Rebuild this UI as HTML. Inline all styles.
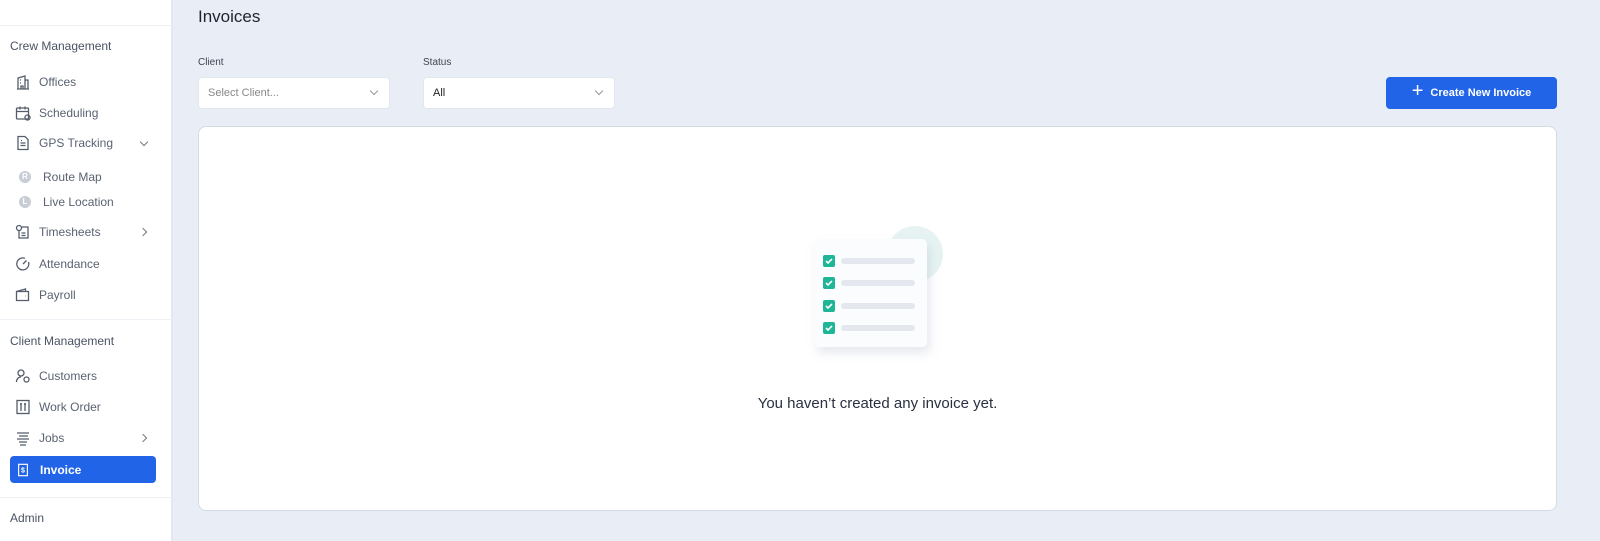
<!DOCTYPE html>
<html><head><style>
*{box-sizing:border-box;margin:0;padding:0}
body{width:1600px;height:541px;overflow:hidden;background:#e9eef6;font-family:"Liberation Sans",sans-serif;position:relative;color:#2b3445}
.sb{position:absolute;left:0;top:0;width:173px;height:541px;background:#fff;border-right:2px solid #e3e8f0}
.hr{position:absolute;left:0;width:172px;height:1px;background:#edf0f4}
.sec{position:absolute;left:10px;font-size:12px;color:#4a5263}
.it{position:absolute;left:15px;font-size:12px;color:#5a6272;display:flex;align-items:center}
.it svg{width:16px;height:16px;margin-right:8px;stroke:#555d6b;fill:none;stroke-width:1.3}
.sub{position:absolute;left:19px;font-size:12px;color:#5a6272;display:flex;align-items:center}
.sub i{width:12px;height:12px;border-radius:50%;background:#c9cdd6;color:#fff;font-size:8px;font-style:normal;font-weight:bold;text-align:center;line-height:12px;margin-right:12px}
.car{position:absolute;left:141px;width:6px;height:6px;border-right:1.2px solid #777;border-bottom:1.2px solid #777;transform:rotate(-45deg)}
.car.d{transform:rotate(45deg)}
.act{position:absolute;left:10px;top:456px;width:146px;height:27px;background:#2264e8;border-radius:4px;color:#fff;font-size:12px;font-weight:bold;display:flex;align-items:center;padding-left:6px}
h1{position:absolute;left:198px;top:7px;font-size:17px;font-weight:normal;color:#1d2330}
.lab{position:absolute;top:57px;font-size:10px;color:#3d4452}
.sel{position:absolute;top:77px;height:32px;background:#fff;border-radius:4px;border:1px solid #e2e7ee;font-size:11px;padding:9px 9px;color:#888}
.sel span{position:absolute;right:12px;top:10px;width:6px;height:6px;border-right:1px solid #999;border-bottom:1px solid #999;transform:rotate(45deg)}
.btn{position:absolute;left:1386px;top:77px;width:171px;height:32px;background:#2264e8;border-radius:4px;color:#fff;font-size:11px;font-weight:bold;display:flex;align-items:center;justify-content:center}
.panel{position:absolute;left:198px;top:126px;width:1359px;height:385px;background:#fff;border:1px solid #d3dbe6;border-radius:8px}
</style></head><body>
<div class="sb">
<div class="hr" style="top:25px"></div>
<div class="sec" style="top:39px">Crew Management</div>
<div class="it" style="top:74px"><svg viewBox="0 0 16 16"><path d="M2 15h12M3 15V4l7-2v13M10 6h3v9M6 15v-3h2v3M5 6h1M5 9h1"/></svg>Offices</div>
<div class="it" style="top:105px"><svg viewBox="0 0 16 16"><rect x="1.5" y="3" width="12" height="11" rx="1"/><path d="M1.5 6.5h12M5 1.5v3M10 1.5v3"/><circle cx="12.5" cy="12.5" r="2.5"/></svg>Scheduling</div>
<div class="it" style="top:135px"><svg viewBox="0 0 16 16"><path d="M3 1.5h7l3 3v10H3z"/><path d="M5.5 8h5M5.5 10.5h5M6 5.5h1"/></svg>GPS Tracking</div>
<div class="car d" style="top:139px"></div>
<div class="sub" style="top:170px"><i>R</i>Route Map</div>
<div class="sub" style="top:195px"><i>L</i>Live Location</div>
<div class="it" style="top:224px"><svg viewBox="0 0 16 16"><circle cx="4" cy="4" r="2.5"/><path d="M7 3h6v11H4V7M6.5 9h4M6.5 11.5h4"/></svg>Timesheets</div>
<div class="car" style="top:229px;left:140px"></div>
<div class="it" style="top:256px"><svg viewBox="0 0 16 16"><path d="M13.5 6A6 6 0 1 1 10 2.3M8 8l3.5-3.5"/></svg>Attendance</div>
<div class="it" style="top:287px"><svg viewBox="0 0 16 16"><path d="M1.5 4.5h12v9h-12zM1.5 4.5l9-2.5v2.5M10.5 9h.5"/></svg>Payroll</div>
<div class="hr" style="top:319px"></div>
<div class="sec" style="top:334px">Client Management</div>
<div class="it" style="top:368px"><svg viewBox="0 0 16 16"><circle cx="6" cy="5" r="3"/><path d="M1.5 14c0-3 2-5 4.5-5"/><circle cx="11.5" cy="11.5" r="2.5"/></svg>Customers</div>
<div class="it" style="top:399px"><svg viewBox="0 0 16 16"><rect x="2" y="1.5" width="12" height="13"/><path d="M6 4v8M10 4v8M5 5h2M9 5h2"/></svg>Work Order</div>
<div class="it" style="top:430px"><svg viewBox="0 0 16 16"><path d="M2 3h12M4 6h9M2 9h12M4 12h8M5 15h6"/></svg>Jobs</div>
<div class="car" style="top:435px;left:140px"></div>
<div class="act"><svg viewBox="0 0 16 16" width="14" height="14" style="margin-right:10px;stroke:#fff;fill:none;stroke-width:1.3"><rect x="3" y="1.5" width="10" height="13"/><text x="8" y="11" font-size="8" fill="#fff" stroke="none" text-anchor="middle">$</text></svg>Invoice</div>
<div class="hr" style="top:497px"></div>
<div class="sec" style="top:511px">Admin</div>
</div>
<h1>Invoices</h1>
<div class="lab" style="left:198px">Client</div>
<div class="lab" style="left:423px">Status</div>
<div class="sel" style="left:198px;width:192px">Select Client...<span></span></div>
<div class="sel" style="left:423px;width:192px;color:#222">All<span></span></div>
<div class="btn"><span style="font-size:20px;font-weight:normal;margin-right:7px;margin-top:-3px">+</span>Create New Invoice</div>
<div class="panel">
<svg style="position:absolute;left:600px;top:90px" width="160" height="150" viewBox="0 0 160 150">
<defs><filter id="s" x="-30%" y="-30%" width="160%" height="160%"><feDropShadow dx="3" dy="6" stdDeviation="5" flood-color="#9aa6b8" flood-opacity="0.25"/></filter></defs>
<circle cx="116" cy="37" r="28" fill="#e6f3f2"/>
<rect x="15" y="22" width="113" height="108" rx="5" fill="#fbfcfe" filter="url(#s)"/>
<g fill="#e4e7ed">
<rect x="42" y="41" width="74" height="6" rx="3"/><rect x="42" y="63" width="74" height="6" rx="3"/><rect x="42" y="86" width="74" height="6" rx="3"/><rect x="42" y="108" width="74" height="6" rx="3"/></g>
<g fill="#1fb597"><rect x="24" y="38" width="12" height="12" rx="2"/><rect x="24" y="60" width="12" height="12" rx="2"/><rect x="24" y="83" width="12" height="12" rx="2"/><rect x="24" y="105" width="12" height="12" rx="2"/></g>
<g fill="none" stroke="#fff" stroke-width="1.6"><path d="M27 44l2 2 4-4"/><path d="M27 66l2 2 4-4"/><path d="M27 89l2 2 4-4"/><path d="M27 111l2 2 4-4"/></g>
</svg>
<div style="position:absolute;left:0;width:100%;top:268px;text-align:center;font-size:15px;color:#2a3040">You haven’t created any invoice yet.</div>
</div>
</body></html>
